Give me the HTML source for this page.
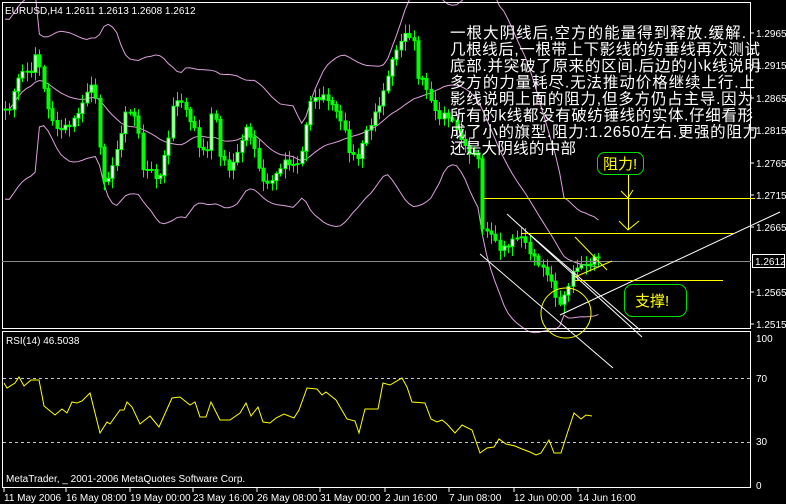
<!DOCTYPE html>
<html><head><meta charset="utf-8"><style>
html,body{margin:0;padding:0;background:#000;width:786px;height:504px;overflow:hidden}
svg{display:block}
.t{font-family:"Liberation Sans","DejaVu Sans",sans-serif;font-size:10px;fill:#fff}
.cn{font-family:"Liberation Sans","Noto Sans CJK SC",sans-serif;font-size:15.5px;fill:#fff}
</style></head><body>
<svg id="s" width="786" height="504" xmlns="http://www.w3.org/2000/svg">
<rect width="786" height="504" fill="#000"/>
<g id="bb"></g>
<g id="cd"></g>
<rect x="2.5" y="2.5" width="748" height="326" fill="none" stroke="#fff"/>
<line x1="2" y1="331.5" x2="751" y2="331.5" stroke="#fff"/>
<rect x="2.5" y="331.5" width="748" height="156" fill="none" stroke="#fff"/>
<line x1="2" y1="261.5" x2="751" y2="261.5" stroke="#8a8a8a"/>
<g class="t">
<text x="756" y="37">1.2965</text><text x="756" y="69">1.2915</text><text x="756" y="102">1.2865</text>
<text x="756" y="134">1.2815</text><text x="756" y="167">1.2765</text><text x="756" y="199">1.2715</text>
<text x="756" y="231">1.2665</text><text x="756" y="296">1.2565</text><text x="756" y="328">1.2515</text>
<text x="756" y="342">100</text><text x="756" y="382">70</text><text x="756" y="445">30</text><text x="756" y="489">0</text>
</g>
<g stroke="#fff"><line x1="751" y1="33" x2="754" y2="33"/><line x1="751" y1="65" x2="754" y2="65"/><line x1="751" y1="98" x2="754" y2="98"/><line x1="751" y1="130" x2="754" y2="130"/><line x1="751" y1="163" x2="754" y2="163"/><line x1="751" y1="195" x2="754" y2="195"/><line x1="751" y1="227" x2="754" y2="227"/><line x1="751" y1="292" x2="754" y2="292"/><line x1="751" y1="324" x2="754" y2="324"/></g>
<rect x="752.5" y="254.5" width="32" height="13" fill="#000" stroke="#fff"/>
<text class="t" x="755" y="265">1.2612</text>
<text class="t" x="5" y="14">EURUSD,H4  1.2611 1.2613 1.2608 1.2612</text>
<line x1="3" y1="378.5" x2="750" y2="378.5" stroke="#c8c8c8" stroke-dasharray="3,3"/>
<line x1="3" y1="442.5" x2="750" y2="442.5" stroke="#c8c8c8" stroke-dasharray="3,3"/>
<text class="t" x="6" y="344">RSI(14) 46.5038</text>
<text class="t" x="6" y="482">MetaTrader, _ 2001-2006 MetaQuotes Software Corp.</text>
<polyline fill="none" stroke="#ffff00" points="4,383 7,388 15,383 19,377 24,386 31,380 39,380 44,406 55,415 62,409 67,413 72,402 77,403 82,401 90,393 100,433 107,422 110,424 120,410 124,410 127,402 132,407 140,424 150,416 159,427 172,398 180,397 190,405 195,402 200,417 206,417 211,402 220,420 230,420 240,413 246,403 251,416 258,407 263,422 270,423 276,418 284,414 294,418 299,410 307,388 317,389 322,395 326,392 336,400 347,419 355,421 359,433 365,409 378,409 383,383 390,385 402,378 407,387 412,402 425,403 431,419 437,422 442,420 447,424 455,433 462,425 472,430 480,453 487,448 494,447 499,439 506,444 515,446 522,449 530,452 536,455 541,453 549,440 554,453 561,453 567,434 574,413 581,419 586,415 592,416"/>
<g class="t"><text x="4" y="501">11 May 2006</text><text x="66" y="501">16 May 08:00</text><text x="130" y="501">19 May 00:00</text><text x="193" y="501">23 May 16:00</text><text x="257" y="501">26 May 08:00</text><text x="320" y="501">31 May 00:00</text><text x="385" y="501">2 Jun 16:00</text><text x="449" y="501">7 Jun 08:00</text><text x="514" y="501">12 Jun 00:00</text><text x="578" y="501">14 Jun 16:00</text></g>
<g stroke="#fff"><line x1="4" y1="488" x2="4" y2="492"/><line x1="66" y1="488" x2="66" y2="492"/><line x1="130" y1="488" x2="130" y2="492"/><line x1="193" y1="488" x2="193" y2="492"/><line x1="257" y1="488" x2="257" y2="492"/><line x1="320" y1="488" x2="320" y2="492"/><line x1="385" y1="488" x2="385" y2="492"/><line x1="449" y1="488" x2="449" y2="492"/><line x1="514" y1="488" x2="514" y2="492"/><line x1="578" y1="488" x2="578" y2="492"/></g>
<g stroke="#fff" stroke-width="1">
<line x1="507" y1="214" x2="642" y2="337"/>
<line x1="480" y1="254" x2="613" y2="368"/>
<line x1="528" y1="233" x2="640" y2="330"/>
<line x1="560" y1="315" x2="780" y2="212"/>
</g>
<g stroke="#ffff00" fill="none">
<line x1="484" y1="198.5" x2="755" y2="198.5"/>
<line x1="521" y1="233.5" x2="733" y2="233.5"/>
<line x1="575" y1="280.5" x2="723" y2="280.5"/>
<line x1="628.5" y1="174" x2="628.5" y2="230"/>
<polyline points="621,191 628,198 633,190"/>
<polyline points="619,221 628,230 639,221"/>
<line x1="575" y1="237" x2="607" y2="270"/>
<line x1="575" y1="277" x2="612" y2="261"/>
<ellipse cx="566" cy="313" rx="25" ry="25"/>
</g>
<rect x="597.5" y="152.5" width="46" height="22" rx="7" fill="#000" stroke="#00e000"/>
<text x="603" y="169" style="font-family:'Liberation Sans','Noto Sans CJK SC',sans-serif;font-size:15px;fill:#ffff00">阻力!</text>
<rect x="624.5" y="284.5" width="62" height="32" rx="8" fill="#000" stroke="#00e000"/>
<text x="635" y="306" style="font-family:'Liberation Sans','Noto Sans CJK SC',sans-serif;font-size:15px;fill:#ffff00">支撑!</text>
<g class="cn">
<text x="450" y="38" textLength="296" lengthAdjust="spacing">一根大阴线后,空方的能量得到释放.缓解.</text>
<text x="450" y="54.5" textLength="310" lengthAdjust="spacing">几根线后,一根带上下影线的纺垂线再次测试</text>
<text x="450" y="71" textLength="310" lengthAdjust="spacing">底部.并突破了原来的区间.后边的小k线说明</text>
<text x="450" y="87.5" textLength="305" lengthAdjust="spacing">多方的力量耗尽.无法推动价格继续上行.上</text>
<text x="450" y="104" textLength="303" lengthAdjust="spacing">影线说明上面的阻力,但多方仍占主导.因为</text>
<text x="450" y="120.5" textLength="303" lengthAdjust="spacing">所有的k线都没有破纺锤线的实体.仔细看形</text>
<text x="450" y="137" textLength="308" lengthAdjust="spacing">成了小的旗型.阻力:1.2650左右.更强的阻力</text>
<text x="450" y="153.5" textLength="126" lengthAdjust="spacing">还是大阴线的中部</text>
</g>
</svg>
<script>
var P=[[4,110],[10,110],[20,75],[30,70],[37,45],[43,85],[50,120],[57,135],[67,125],[77,110],[93,85],[97,120],[103,185],[110,170],[117,145],[127,110],[133,120],[140,140],[143,175],[150,160],[157,180],[167,150],[173,110],[180,100],[187,110],[193,120],[200,150],[207,155],[213,105],[220,155],[230,165],[237,150],[247,130],[253,150],[263,180],[273,175],[283,165],[293,170],[300,160],[310,95],[323,100],[343,120],[350,150],[360,160],[363,140],[370,130],[383,90],[390,60],[403,40],[413,40],[417,75],[423,75],[432,100],[437,120],[447,120],[455,125],[470,150],[478,160],[482,235],[490,235],[500,245],[510,240],[520,240],[530,255],[540,260],[550,275],[555,300],[560,308],[565,300],[570,280],[575,265],[580,260],[590,262],[600,260]];
function yAt(x){for(var i=1;i<P.length;i++){if(x<=P[i][0]){var a=P[i-1],b=P[i];return a[1]+(b[1]-a[1])*(x-a[0])/(b[0]-a[0]);}}return P[P.length-1][1];}
var ns="http://www.w3.org/2000/svg",cd=document.getElementById('cd'),bb=document.getElementById('bb');
function el(t,a,p){var e=document.createElementNS(ns,t);for(var k in a)e.setAttribute(k,a[k]);p.appendChild(e);return e;}
var closes=[],xs=[],prev=yAt(4);
for(var x=5;x<=600;x+=4.3){var c=yAt(x)+5*Math.sin(x*1.3)+2*Math.cos(x*0.63);xs.push(x);closes.push(c);
var o=prev;prev=c;var hi=Math.min(o,c)-2-7*Math.abs(Math.sin(x*2.3)),lo=Math.max(o,c)+2+8*Math.abs(Math.cos(x*1.9));
var X=Math.round(x)+0.5;el('line',{x1:X,y1:hi,x2:X,y2:lo,stroke:'#00ff00'},cd);
var t=Math.min(o,c),h=Math.max(1,Math.abs(o-c));
el('rect',{x:X-1.5,y:t,width:3,height:h,fill:c<o?'#ffffff':'#00ff00',stroke:'#00ff00','stroke-width':1},cd);}
var up=[],mid=[],dn=[];
for(var i=0;i<closes.length;i++){var s=Math.max(0,i-19),n=i-s+1,m=0;for(var j=s;j<=i;j++)m+=closes[j];m/=n;var v=0;for(j=s;j<=i;j++)v+=(closes[j]-m)*(closes[j]-m);var sd=Math.max(14,Math.sqrt(v/n)*1.3);if(i<8)sd=45;
mid.push(xs[i]+','+m);up.push(xs[i]+','+(m-2*sd));dn.push(xs[i]+','+(m+2*sd));}
[up,mid,dn].forEach(function(a){el('polyline',{points:a.join(' '),fill:'none',stroke:'#dda0dd'},bb);});
</script>
</body></html>
